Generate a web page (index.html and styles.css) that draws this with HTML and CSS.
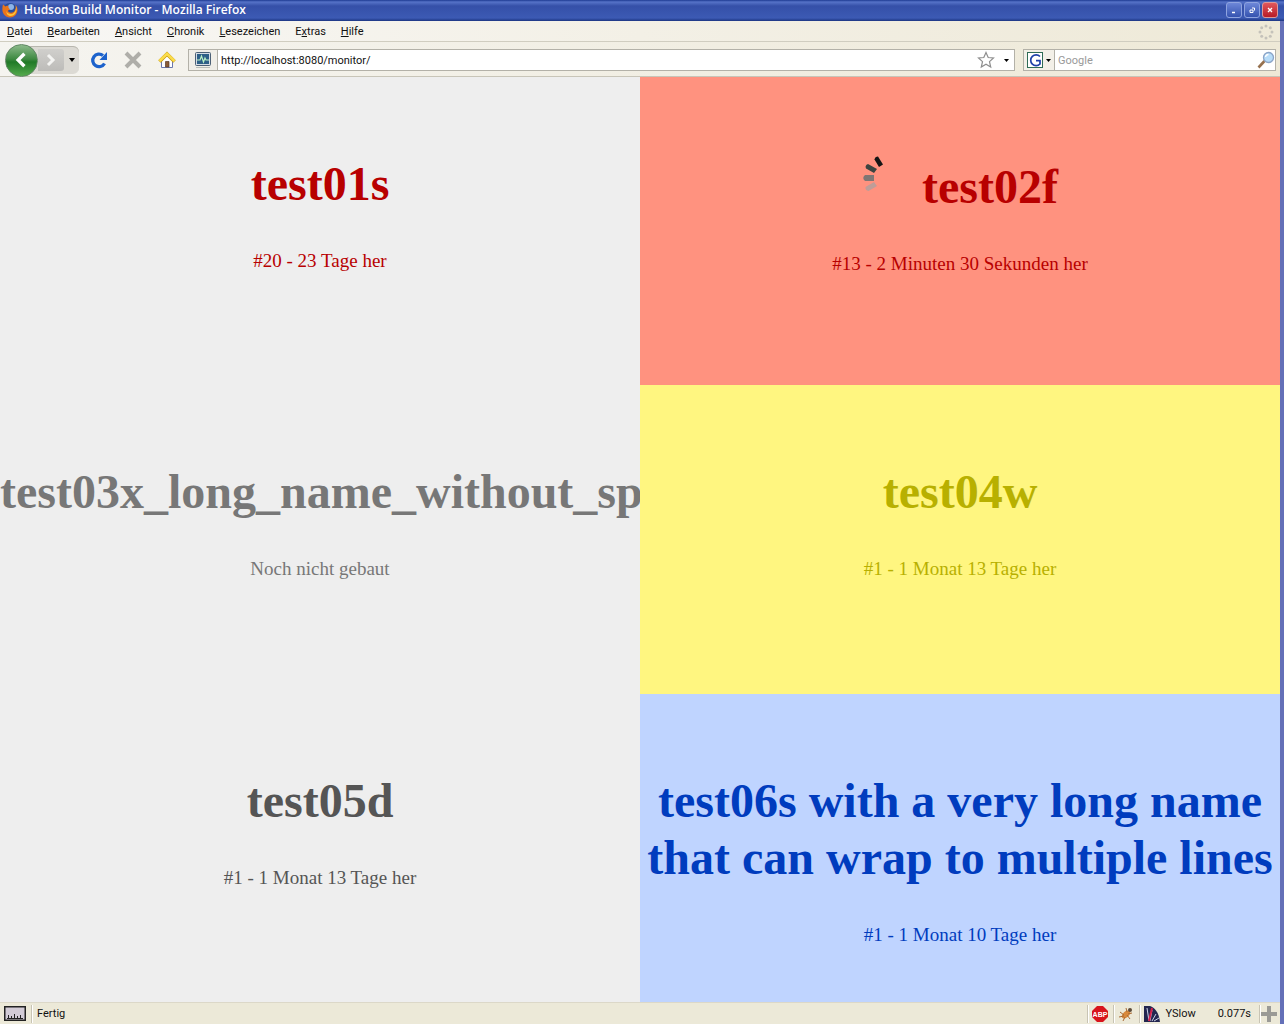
FILE: index.html
```html
<!DOCTYPE html>
<html lang="de">
<head>
<meta charset="utf-8">
<title>Hudson Build Monitor</title>
<link rel="stylesheet" href="styles.css">
</head>
<body>
<div class="window">
  <header class="titlebar">
    <svg class="app-icon" viewBox="0 0 16 16" aria-hidden="true">
      <circle cx="8" cy="8" r="7" fill="#2a4f9c"/>
      <circle cx="9" cy="5" r="3" fill="#8db4e8"/>
      <path d="M1 2.500C0 6 0 10 2 12.500 5 16.500 11 16.500 14 12.500 16 9.500 16 5.500 13.500 3 14.500 6 13 9 11.500 10 9 11.500 6 10.500 6 8.500L8 7.500C7 6 6 5.500 6.500 4 5 3.500 4 4 3.500 4.500 2.500 4 2 3 1 2.500Z" fill="#e8741c"/>
      <path d="M13.500 3C15 7 13 11 10 12 7 12.500 5 11 4.500 9 4 13 8 15 11 13.500 14.500 12 15.500 7 13.500 3Z" fill="#fbc53a"/>
    </svg>
    <span class="window-title">Hudson Build Monitor - Mozilla Firefox</span>
    <div class="window-buttons">
      <button class="win-btn" aria-label="Minimieren"><svg viewBox="0 0 14 14"><path d="M5 9.500h3" stroke="#fff" stroke-width="1.500"/></svg></button>
      <button class="win-btn" aria-label="Wiederherstellen"><svg viewBox="0 0 14 14" fill="none" stroke="#fff"><path d="M5 7h3v2.500H5zM7 5h2.500v2.500"/></svg></button>
      <button class="win-btn win-close" aria-label="Schließen"><svg viewBox="0 0 14 14"><path d="M5 5l4 4M9 5l-4 4" stroke="#fff" stroke-width="1.300"/></svg></button>
    </div>
  </header>

  <nav class="menubar">
    <button class="menu"><u>D</u>atei</button>
    <button class="menu"><u>B</u>earbeiten</button>
    <button class="menu"><u>A</u>nsicht</button>
    <button class="menu"><u>C</u>hronik</button>
    <button class="menu"><u>L</u>esezeichen</button>
    <button class="menu">E<u>x</u>tras</button>
    <button class="menu"><u>H</u>ilfe</button>
    <svg class="throbber" viewBox="0 0 16 16" fill="#c4c2ba" aria-hidden="true">
      <circle cx="8" cy="2" r="1.500"/><circle cx="12.300" cy="3.700" r="1.500"/><circle cx="14" cy="8" r="1.500"/><circle cx="12.300" cy="12.300" r="1.500"/><circle cx="8" cy="14" r="1.500"/><circle cx="3.700" cy="12.300" r="1.500"/><circle cx="2" cy="8" r="1.500"/><circle cx="3.700" cy="3.700" r="1.500"/>
    </svg>
  </nav>

  <div class="toolbar">
    <div class="history">
      <button class="back" aria-label="Zurück"><svg viewBox="0 0 32 32"><path d="M19 9.500l-6.500 6.500 6.500 6.500" fill="none" stroke="#fff" stroke-width="3.500"/></svg></button>
      <button class="forward" aria-label="Vor"><svg viewBox="0 0 16 16"><path d="M5 3l5 5-5 5" fill="none" stroke="#f4f4f2" stroke-width="3"/></svg></button>
      <button class="history-menu" aria-label="Verlauf"><svg viewBox="0 0 8 4"><path d="M1 0h6L4 4z"/></svg></button>
    </div>
    <button class="tool" aria-label="Neu laden"><svg viewBox="0 0 18 18"><path d="M14.500 12.500A6.300 6.300 0 1 1 13 4.500" fill="none" stroke="#1c62cc" stroke-width="3.300"/><path d="M17 1v8H9.500z" fill="#1c62cc"/></svg></button>
    <button class="tool" aria-label="Stopp"><svg viewBox="0 0 18 18"><path d="M2 2l14 14M16 2L2 16" stroke="#afaea9" stroke-width="4"/></svg></button>
    <button class="tool" aria-label="Startseite"><svg viewBox="0 0 18 18"><path d="M3.500 8.500V16.500h11V8.500L9 4z" fill="#fff" stroke="#6a78ae"/><path d="M7.500 10.500h3.500V16H7.500z" fill="#8a5b36" stroke="#5a3c28" stroke-width=".7"/><path d="M1.500 10.500L9 3l7.500 7.500" fill="none" stroke="#c69a10" stroke-width="3.600"/><path d="M1.500 10L9 2.800 16.500 10" fill="none" stroke="#fbdc4a" stroke-width="2.600"/></svg></button>

    <div class="field address">
      <span class="site"><svg viewBox="0 0 16 16"><rect x=".5" y=".5" width="15" height="13" rx="1" fill="#d5dce4" stroke="#4c6076"/><rect x="2" y="2" width="12" height="10" fill="#2d5f87"/><path d="M2 8h3l1.500-4 2 6L10 6l1 2h3" fill="none" stroke="#b9f0c4" stroke-width="1.200"/><path d="M1 15.500h14" stroke="#b9bdb9"/></svg></span>
      <input class="field-input" type="text" aria-label="Adresse" value="http://localhost:8080/monitor/">
      <button class="star" aria-label="Lesezeichen hinzufügen"><svg viewBox="0 0 18 18"><path d="M9 1.500l2.200 5 5.300.5-4 3.600 1.200 5.400L9 13.200 4.300 16l1.200-5.400-4-3.600 5.300-.5z" fill="#fff" stroke="#8e8e8e" stroke-width="1.200"/></svg></button>
      <button class="drop" aria-label="Adressliste"><svg viewBox="0 0 5 3"><path d="M0 0h5L2.500 3z"/></svg></button>
    </div>

    <div class="field search">
      <button class="engine" aria-label="Suchmaschine"><svg class="engine-logo" viewBox="0 0 16 16"><rect x=".5" y=".5" width="15" height="15" fill="#fff" stroke="#2f6b55"/><path d="M13 4.500A5.400 5.400 0 1 0 13 12V8.700H9" fill="none" stroke="#1d3fa8" stroke-width="1.700"/></svg><svg class="engine-arrow" viewBox="0 0 5 3"><path d="M0 0h5L2.500 3z"/></svg></button>
      <input class="field-input" type="text" aria-label="Suche" placeholder="Google">
      <button class="find" aria-label="Suchen"><svg viewBox="0 0 18 18"><path d="M1.500 16.500L7.500 10" stroke="#96714f" stroke-width="2.600"/><circle cx="11.500" cy="6.500" r="5" fill="#b7dcf8" stroke="#8ba5c8" stroke-width="1.300"/><path d="M8.500 6a3 3 0 0 1 3-2.500" fill="none" stroke="#fff" stroke-width="1.300"/></svg></button>
    </div>
  </div>

  <main class="monitor">
    <section class="job failed-old">
      <h1>test01s</h1>
      <p>#20 - 23 Tage her</p>
    </section>
    <section class="job failed">
      <h1><svg class="spinner" viewBox="0 0 48 48" aria-hidden="true">
        <path d="M17 12l-4.500-7.500Q13 1.500 16 1.500l5 8z" fill="#151515"/>
        <path d="M12 18l-8-4.500Q2.500 10.500 6 9l9 5z" fill="#3c4440"/>
        <path d="M12 26H3Q-.5 23 3 20h9z" fill="#7f7674"/>
        <path d="M15 31l-8.500 5Q3 35.500 3.500 32l8.500-5z" fill="#bf9d98"/>
      </svg> test02f</h1>
      <p>#13 - 2 Minuten 30 Sekunden her</p>
    </section>
    <section class="job unbuilt">
      <h1>test03x_long_name_without_sp</h1>
      <p>Noch nicht gebaut</p>
    </section>
    <section class="job unstable">
      <h1>test04w</h1>
      <p>#1 - 1 Monat 13 Tage her</p>
    </section>
    <section class="job disabled">
      <h1>test05d</h1>
      <p>#1 - 1 Monat 13 Tage her</p>
    </section>
    <section class="job stable">
      <h1>test06s with a very long name that can wrap to multiple lines</h1>
      <p>#1 - 1 Monat 10 Tage her</p>
    </section>
  </main>

  <footer class="statusbar">
    <span class="panel gauge"><svg viewBox="0 0 22 16"><rect x=".75" y=".75" width="20.500" height="13.500" fill="#d2cbd6" stroke="#222" stroke-width="1.500"/><path d="M4.500 12.500V9M7.500 12.500V10M10.500 12.500V8M13.500 12.500V10M16.500 12.500V9M3 12.500h16" stroke="#222"/></svg></span>
    <span class="panel message">Fertig</span>
    <span class="panel"><svg class="status-icon" viewBox="0 0 16 16"><path d="M5 0h6l5 5v6l-5 5H5l-5-5V5z" fill="#d8141c"/><text x="8" y="11" text-anchor="middle" class="abp">ABP</text></svg></span>
    <span class="panel"><svg class="status-icon" viewBox="0 0 16 16"><ellipse cx="8" cy="8.500" rx="5" ry="3" transform="rotate(-40 8 8.500)" fill="#d98a3d"/><path d="M2 6l4 3M1 11l5-1M5 15l2-4M8 2l1 4M14 7l-4 1M12 13l-3-4" stroke="#a86a35"/><circle cx="12" cy="4" r="2" fill="#5d4a38"/></svg></span>
    <span class="panel yslow"><svg class="status-icon" viewBox="0 0 16 16"><path d="M0 0h6c6 2 9 8 10 16H0z" fill="#23264f"/><path d="M5 15L3 2M6 15L8 4M8 15l4-7M10 15l5-3" stroke="#cdd3ea"/><path d="M5 15L8 2" stroke="#d51f4b" stroke-width="2"/></svg><span>YSlow</span><span>0.077s</span></span>
    <span class="panel add"><svg class="status-icon" viewBox="0 0 16 16"><path d="M6 0h4v6h6v4h-6v6H6v-6H0V6h6z" fill="#9a9a96"/></svg></span>
  </footer>
</div>
</body>
</html>
```
FILE: styles.css
```css
* { box-sizing: border-box; }

body {
  margin: 0;
  font: 11px/14px Roboto, "Noto Sans", sans-serif;
  color: #111;
}

button {
  display: flex;
  align-items: center;
  justify-content: center;
  margin: 0;
  padding: 0;
  border: 0;
  background: none;
  color: inherit;
  font: inherit;
}

svg { display: block; }

.window {
  display: flex;
  flex-direction: column;
  min-height: 100vh;
  border-right: 4px solid #6470b8;
}

.titlebar {
  display: flex;
  align-items: center;
  height: 21px;
  margin-right: -4px;
  padding: 0 6px 2px 2px;
  background: linear-gradient(#1d3a92, #5673c8 2px, #3550a8 6px, #3c5ab4 18px, #1c3582);
}

.app-icon { width: 16px; height: 16px; }

.window-title {
  flex: 1;
  padding-left: 6px;
  color: #fff;
  font: 600 12px/16px "Open Sans", "Noto Sans", sans-serif;
}

.window-buttons { display: flex; gap: 2px; }

.win-btn {
  width: 16px;
  height: 16px;
  border: 1px solid #8fa4e0;
  border-radius: 3px;
  background: linear-gradient(#6d87d8, #3553b0);
}

.win-btn svg { width: 14px; height: 14px; }
.win-close { border-color: #d99; background: linear-gradient(#e0585c, #b81c28); }

.menubar {
  display: flex;
  align-items: center;
  gap: 15px;
  height: 21px;
  padding: 1px 6px 0 7px;
  border-bottom: 1px solid #d0cdc0;
  background: linear-gradient(to right, #f8f7f5, #eee9d7);
}

.throbber { width: 16px; height: 16px; margin-left: auto; }

.toolbar {
  display: flex;
  align-items: center;
  height: 35px;
  padding: 2px 4px 0 5px;
  border-bottom: 1px solid #c8c5b8;
  background: linear-gradient(to right, #f5f4f0, #eee9d7);
}

.history {
  display: flex;
  align-items: center;
  height: 28px;
  margin-right: 11px;
  border-radius: 14px 6px 6px 14px;
  background: #dcdad4;
  box-shadow: inset 0 1px #b8b6ae;
}

.back {
  width: 33px;
  height: 33px;
  border: 1px solid #5f8763;
  border-radius: 50%;
  background: linear-gradient(#8dbb8c, #3f8a42 45%, #217a27 55%, #54ab4d);
}

.back svg { width: 32px; height: 32px; }
.forward { width: 26px; height: 22px; background: linear-gradient(#d0cfcc, #bdbcb9); border-radius: 0 3px 3px 0; }
.forward svg { width: 16px; height: 16px; }
.history-menu { width: 15px; height: 22px; }
.history-menu svg { width: 8px; height: 4px; }

.tool { width: 18px; height: 18px; margin-right: 16px; }
.tool svg { width: 18px; height: 18px; }
.tool + .field { margin-left: -4px; }

.field {
  display: flex;
  align-items: center;
  height: 22px;
  border: 1px solid #b3b1a8;
  background: #fff;
}

.address { flex: 1; margin-right: 8px; }

.site {
  display: flex;
  align-items: center;
  justify-content: center;
  align-self: stretch;
  width: 29px;
  border-right: 1px solid #b3b1a8;
  background: #f0eee8;
}

.site svg { width: 16px; height: 16px; }

.field-input {
  flex: 1;
  min-width: 0;
  height: 20px;
  padding: 1px 3px 0;
  border: 0;
  outline: 0;
  background: none;
  color: #111;
  font: inherit;
}

.field-input::placeholder { color: #999; opacity: 1; }
.star svg { width: 18px; height: 18px; }
.drop { width: 15px; margin-left: 4px; }
.drop svg { width: 5px; height: 3px; }
.search { width: 253px; }

.engine {
  gap: 3px;
  align-self: stretch;
  width: 31px;
  border-right: 1px solid #b3b1a8;
  background: #f3f0e8;
}

.engine-logo { width: 16px; height: 16px; }
.engine-arrow { width: 5px; height: 3px; }
.find svg { width: 18px; height: 18px; }

.monitor {
  display: grid;
  flex: 1;
  grid-template-columns: repeat(2, minmax(0, 1fr));
  grid-auto-rows: 1fr;
  font-family: "Liberation Serif", "Times New Roman", serif;
  text-align: center;
}

.job {
  overflow: hidden;
  padding-top: 78px;
  background: #eee;
}

.job h1 {
  margin: 0 0 38px;
  font-size: 48px;
  font-weight: bold;
  line-height: 57px;
}

.job p {
  margin: 0;
  font-size: 19px;
  line-height: 22px;
}

.failed-old { color: #b80000; }
.failed { background: #ff927f; color: #b80000; }
.unbuilt { color: #777; }
.unstable { background: #fff680; color: #b8b000; }
.disabled { color: #555; }
.stable { background: #bfd4ff; color: #003cbe; }

.spinner {
  display: inline-block;
  width: 48px;
  height: 48px;
  vertical-align: baseline;
}

.statusbar {
  display: flex;
  align-items: center;
  height: 22px;
  border-top: 1px solid #dcd8c8;
  background: #ece9d8;
}

.panel {
  display: flex;
  align-items: center;
  height: 18px;
  padding: 0 5px 0 4px;
  border-right: 1px solid #c8c4b4;
  box-shadow: 1px 0 #fff;
}

.gauge svg { width: 22px; height: 16px; }
.message { flex: 1; padding-left: 5px; }
.status-icon { width: 16px; height: 16px; }
.yslow { gap: 22px; padding-right: 8px; }
.yslow .status-icon { margin-right: -17px; }
.add { padding: 0 3px 0 1px; border: 0; box-shadow: none; }

.abp {
  fill: #fff;
  font: bold 7px "Liberation Sans", sans-serif;
}
```
